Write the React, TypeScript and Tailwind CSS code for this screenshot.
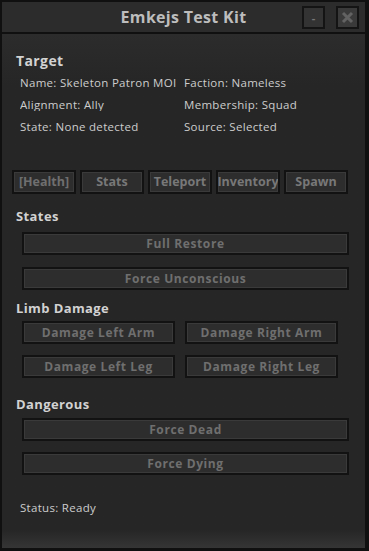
import type { PropsWithChildren } from "react";

const font = { fontFamily: '"Open Sans", "DejaVu Sans", sans-serif' };

function Btn({ children, className = "" }: PropsWithChildren<{ className?: string }>) {
  return (
    <div
      className={`flex items-center justify-center border-2 border-[#121212] bg-[#2d2d2d] font-bold text-[#6f6f6f] shadow-[inset_0_0_0_1px_#3a3a3a] ${className}`}
    >
      {children}
    </div>
  );
}

function Heading({ children, className = "" }: PropsWithChildren<{ className?: string }>) {
  return (
    <h2 className={`pl-[14px] text-[13px] font-bold leading-none tracking-[0.4px] text-[#d2d2d2] ${className}`}>
      {children}
    </h2>
  );
}

export default function App() {
  const info = [
    ["Name: Skeleton Patron MOI", "Faction: Nameless"],
    ["Alignment: Ally", "Membership: Squad"],
    ["State: None detected", "Source: Selected"],
  ];
  const tabs = ["[Health]", "Stats", "Teleport", "Inventory", "Spawn"];
  const btn = "h-[23px] text-[12px] tracking-[0.6px]";

  return (
    <div style={font} className="flex h-[551px] w-[369px] flex-col bg-[#101010] p-[2px] pr-[4px] pb-[3px]">
      <div className="relative flex h-[30px] items-center justify-center bg-[#2c2c2c]">
        <span className="text-[16px] font-bold tracking-[0.3px] text-[#bdbdbd]">Emkejs Test Kit</span>
        <div className="absolute right-[6px] top-[4px] flex gap-[11px]">
          <div className="flex h-[23px] w-[23px] items-center justify-center border-2 border-[#141414] bg-[#333] text-[11px] font-bold leading-none text-[#777]">
            -
          </div>
          <div className="flex h-[23px] w-[23px] items-center justify-center border-2 border-[#141414] bg-[#3a3a3a]">
            <svg width="13" height="13" viewBox="0 0 13 13">
              <path d="M2 2L11 11M11 2L2 11" stroke="#626262" strokeWidth="3" />
            </svg>
          </div>
        </div>
      </div>
      <div className="h-[2px] bg-[#101010]" />
      <div className="flex flex-1 flex-col bg-gradient-to-b from-[#2c2c2c] via-[#262626] via-[10%] to-[#262626] pt-[20px]">
        <Heading className="text-[14px]">Target</Heading>
        <div className="mt-[8px] grid grid-cols-[164px_1fr] gap-y-[9px] pl-[18px] text-[11.5px] leading-[13px] tracking-[0.3px] text-[#cdcdcd]">
          {info.map(([a, b]) => [
            <span key={a} className="overflow-hidden whitespace-nowrap">{a}</span>,
            <span key={b}>{b}</span>,
          ])}
        </div>

        <div className="mt-[37px] flex gap-[4px] pl-[10px]">
          {tabs.map((t, i) => (
            <Btn
              key={t}
              className={`h-[24px] w-[64px] overflow-hidden whitespace-nowrap text-[12.5px] ${i === 0 ? "text-[#6a6a6a]" : "text-[#787878]"}`}
            >
              {t}
            </Btn>
          ))}
        </div>

        <Heading className="mt-[16px]">States</Heading>
        <div className="mt-[9px] flex flex-col gap-[12px] pl-[20px] pr-[16px]">
          <Btn className={btn}>Full Restore</Btn>
          <Btn className={btn}>Force Unconscious</Btn>
        </div>

        <Heading className="mt-[12px]">Limb Damage</Heading>
        <div className="mt-[6px] grid grid-cols-[153px_153px] gap-x-[10px] gap-y-[11px] pl-[20px]">
          <Btn className={btn}>Damage Left Arm</Btn>
          <Btn className={btn}>Damage Right Arm</Btn>
          <Btn className={btn}>Damage Left Leg</Btn>
          <Btn className={btn}>Damage Right Leg</Btn>
        </div>

        <Heading className="mt-[20px]">Dangerous</Heading>
        <div className="mt-[7px] flex flex-col gap-[11px] pl-[20px] pr-[16px]">
          <Btn className={btn}>Force Dead</Btn>
          <Btn className={btn}>Force Dying</Btn>
        </div>

        <p className="mt-[24px] pl-[18px] text-[11.5px] tracking-[0.3px] text-[#cdcdcd]">Status: Ready</p>
        <div className="mt-auto h-[18px] bg-gradient-to-b from-[#262626] to-[#353535]" />
      </div>
    </div>
  );
}
